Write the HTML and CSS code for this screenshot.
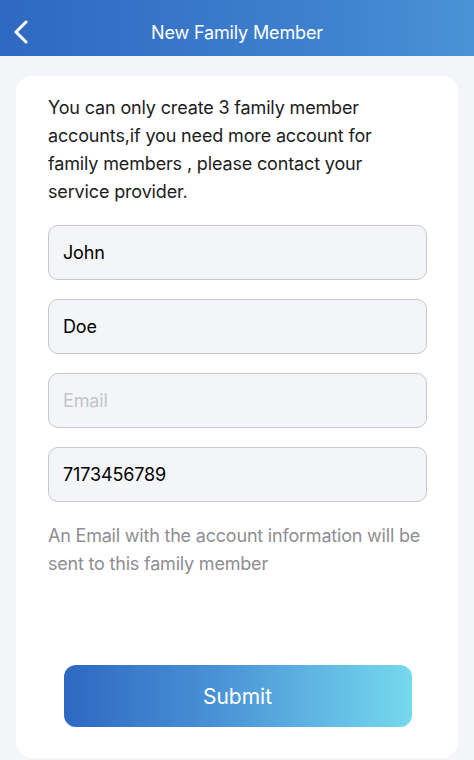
FILE: index.html
```html
<!DOCTYPE html>
<html lang="en">
	<head>
		<title>New Family Member</title>
		<meta charset="utf-8" />
		<link rel="stylesheet" href="styles.css">
	</head>

	<body>
		<!-- top bar -->
		<div class="topbar">
			<a class="back" href="#">
				<svg width="16" height="24" viewBox="0 0 16 24">
					<path d="M13 2 L3 12 L13 22" fill="none" stroke="#fff" stroke-width="3" stroke-linecap="round" stroke-linejoin="round" />
				</svg>
			</a>
			<div class="title">New Family Member</div>
		</div>

		<!-- main card -->
		<div class="page">
			<div class="card">
				<p class="intro">
					You can only create 3 family member accounts,if you need more account for family members , please contact your service provider.
				</p>

				<form class="form">
					<input class="field" type="text" value="John" />
					<input class="field" type="text" value="Doe" />
					<input class="field" type="email" placeholder="Email" />
					<input class="field" type="tel" value="7173456789" />
				</form>

				<p class="note">An Email with the account information will be sent to this family member</p>

				<button class="submit">Submit</button>
			</div>
		</div>
	</body>
</html>
```

FILE: styles.css
```css
/* page basics */
body {
	margin: 0;
	background: #f4f5f9;
	font-family: Inter, "Liberation Sans", Arial, sans-serif;
	letter-spacing: -0.15px;
	height: 760px;
	overflow: hidden;
}

/* blue header */
.topbar {
	height: 56px;
	background: linear-gradient(90deg, #2e68c2, #3f82cf 70%, #4a93d6);
	display: flex;
	align-items: center;
	justify-content: center;
	position: relative;
}
.back {
	position: absolute;
	left: 13px;
	top: 20px;
}
.title {
	color: #fff;
	font-size: 18px;
	padding-top: 8px;
}

/* card */
.page {
	padding: 20px 16px 0 16px;
}
.card {
	background: #fff;
	border-radius: 16px;
	height: 682px;
	padding: 18px 31px 0 32px;
	box-sizing: border-box;
}

.intro {
	margin: 0;
	font-size: 18px;
	line-height: 28px;
	color: #1c1c1e;
	padding-right: 20px;
}

.form {
	display: flex;
	flex-direction: column;
	gap: 19px;
	margin-top: 19px;
}
.field {
	height: 55px;
	box-sizing: border-box;
	border: 1px solid #c7c7cc;
	border-radius: 10px;
	background: #f4f5f9;
	padding: 0 14px;
	font-family: Inter, "Liberation Sans", Arial, sans-serif;
	letter-spacing: -0.15px;
	font-size: 18px;
	color: #000;
	outline: none;
}
.field::placeholder {
	color: #c4c4c8;
}

.note {
	margin: 20px 0 0 0;
	font-size: 18px;
	line-height: 28px;
	color: #8e8e93;
	letter-spacing: -0.2px;
}

.submit {
	display: block;
	margin: 87px auto 0 auto;
	width: 348px;
	height: 62px;
	border: none;
	border-radius: 12px;
	background: linear-gradient(90deg, #2e68c2, #4a93d6 45%, #76d9ee);
	color: #fff;
	font-family: Inter, "Liberation Sans", Arial, sans-serif;
	font-size: 21px;
}
```
